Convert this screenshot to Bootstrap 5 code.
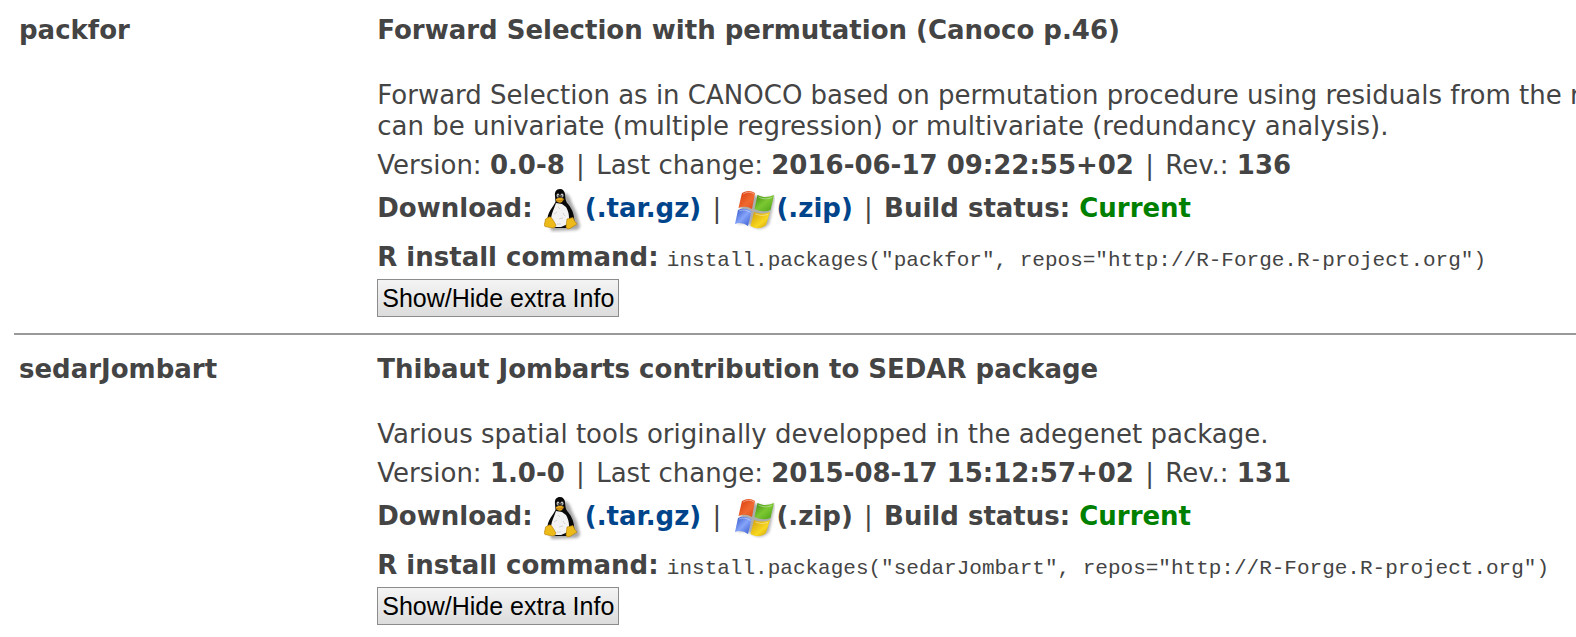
<!DOCTYPE html>
<html lang="en">
<head>
<meta charset="utf-8">
<meta name="viewport" content="width=device-width, initial-scale=1">
<title>R packages</title>
<link href="https://cdn.jsdelivr.net/npm/bootstrap@5.3.0/dist/css/bootstrap.min.css" rel="stylesheet">
<style>
  body { font: 26px/31px "DejaVu Sans", Verdana, sans-serif; color: #444; background: #fff; overflow-x: hidden; }
  .packages { padding: 15px 0 0 14px; }
  .package { padding: 0 0 16px; }
  .package + .package { border-top: 2px solid #999; padding-top: 19px; }
  .pkg-name { flex: 0 0 23%; padding-left: 5px; }
  .pkg-info { flex: 1 1 0; min-width: 0; padding-left: 4px; white-space: nowrap; }
  .package h2, .pkg-title { font-size: 26px; line-height: 31px; font-weight: 700; margin: 0; }
  .pkg-title { margin-bottom: 34px; }
  .pkg-info p { margin: 0 0 8px; }
  .package a { color: #00458b; font-weight: 700; text-decoration: none; }
  .downloads svg { width: 40px; height: 44px; margin: 0 1px 0 3px; vertical-align: -16px; }
  .sep { margin: 0 3px; }
  .current { color: #008000; }
  .package code { font: 21px "Liberation Mono", "Courier New", monospace; color: #444; }
  .pkg-info .downloads { margin-bottom: 9px; }
  .pkg-info .install { margin-bottom: 6px; }
  .toggle { font: 25px/32px "Liberation Sans", Arial, sans-serif; color: #000; padding: 2px 4px; border: 1px solid #8c8c8c; border-radius: 0; background: linear-gradient(#f4f4f4, #dcdcdc); display: block; }
</style>
</head>
<body>
<svg width="0" height="0" class="position-absolute" aria-hidden="true">
  <defs>
    <filter id="soft" x="-30%" y="-30%" width="160%" height="160%"><feGaussianBlur stdDeviation="1.5"/></filter>
    <linearGradient id="wr" x2="1" y2="1"><stop stop-color="#d8380c"/><stop offset=".6" stop-color="#f06a30"/><stop offset="1" stop-color="#d84a18"/></linearGradient>
    <linearGradient id="wg" x2="1" y2="1"><stop stop-color="#3c8a10"/><stop offset=".5" stop-color="#7cc832"/><stop offset="1" stop-color="#4ba018"/></linearGradient>
    <linearGradient id="wb" x2="1" y2="1"><stop stop-color="#2c50c8"/><stop offset=".5" stop-color="#86a4f8"/><stop offset="1" stop-color="#3055d0"/></linearGradient>
    <linearGradient id="wy" x2="1" y2="1"><stop stop-color="#d09a08"/><stop offset=".6" stop-color="#f8d820"/><stop offset="1" stop-color="#c89808"/></linearGradient>
    <symbol id="tux" viewBox="0 0 40 44">
      <path d="M20 4Q25 4 27 12L33 25L36 37Q36 41 30 41L8 42Q5 40 8 36L16 20Z" fill="#777" opacity=".65" filter="url(#soft)"/>
      <path d="M16 0C12 0 10.500 3 11 7L11.500 13C9 18 4.500 22 3.500 29L5 36L12 39H23L30 35C31 28 29 21 24 15C21 12 21.500 8 21 5C20.500 2 19 0 16 0Z" fill="#090909"/>
      <path d="M12 14L18 15L22 18C25 23 26 29 24 35L17 38H11L7 29C8 23 10 20 12 14Z" fill="#f3f3f3"/>
      <path d="M10 25l3-2m2 7l4-1m-5-11l2 2m3 4l2 3m-8 8h4" stroke="#d5d5d5" stroke-width="1" fill="none"/>
      <ellipse cx="14" cy="6.500" rx="1.400" ry="2" fill="#ccc"/><ellipse cx="18" cy="6.500" rx="1.500" ry="2" fill="#ccc"/>
      <circle cx="14.300" cy="7" r=".7"/><circle cx="17.700" cy="7" r=".7"/>
      <path d="M12 10Q16 7 20 10L18 13Q15.500 15 12 12Z" fill="#e9a91c"/>
      <path d="M12 11.500Q16 13 20 10.500" stroke="#a96d08" stroke-width=".8" fill="none"/>
      <path d="M5 28Q7 27 9 31L12 36Q11 40 6 38.500L1 37.500Q-.500 36 1 33L1.500 30Z" fill="#edbb19" stroke="#b47a05" stroke-width=".6"/>
      <path d="M23 30L29 28.500L30.500 32L33 35Q30 37 26 39.500Q23 41 22 38Z" fill="#edbb19" stroke="#b47a05" stroke-width=".6"/>
    </symbol>
    <symbol id="win" viewBox="0 0 40 44">
      <path d="M8 6Q16 3 21 7Q30 11 40 7L34 35Q26 43 17 37Q10 33 3 35Z" fill="#777" opacity=".6" filter="url(#soft)"/>
      <path d="M7 4Q14 0 20 4L17 20Q11 16 3.500 19Z" fill="url(#wr)"/>
      <path d="M22.500 6Q30 10 39 6L35.500 21Q28 24 19.500 20Z" fill="url(#wg)"/>
      <path d="M3 21Q9 18 16.500 22L13 37Q7 32.500 0 35Z" fill="url(#wb)"/>
      <path d="M19 23Q27 26 35 23L31 36Q24 42 15.500 37Z" fill="url(#wy)"/>
      <path d="M8 5Q14 1.500 19 5M23.500 8Q30 11.500 37 8.500M4 22Q10 19.500 15.500 23.500M20 25Q27 28 33 25.500" fill="none" stroke="#fff" opacity=".4"/>
    </symbol>
  </defs>
</svg>

<main class="packages">
  <article class="package d-flex">
    <h2 class="pkg-name">packfor</h2>
    <div class="pkg-info">
      <h3 class="pkg-title">Forward Selection with permutation (Canoco p.46)</h3>
      <p>Forward Selection as in CANOCO based on permutation procedure using residuals from the re<br>can be univariate (multiple regression) or multivariate (redundancy analysis).</p>
      <p>Version: <b>0.0-8</b> <span class="sep">|</span> Last change: <b>2016-06-17 09:22:55+02</b> <span class="sep">|</span> Rev.: <b>136</b></p>
      <p class="downloads"><b>Download:</b> <svg aria-hidden="true"><use href="#tux"/></svg><a href="#">(.tar.gz)</a> <span class="sep">|</span> <svg aria-hidden="true"><use href="#win"/></svg><a href="#">(.zip)</a> <span class="sep">|</span> <b>Build status: <span class="current">Current</span></b></p>
      <p class="install"><b>R install command:</b> <code>install.packages("packfor", repos="http://R-Forge.R-project.org")</code></p>
      <button type="button" class="toggle">Show/Hide extra Info</button>
    </div>
  </article>
  <article class="package d-flex">
    <h2 class="pkg-name">sedarJombart</h2>
    <div class="pkg-info">
      <h3 class="pkg-title">Thibaut Jombarts contribution to SEDAR package</h3>
      <p>Various spatial tools originally developped in the adegenet package.</p>
      <p>Version: <b>1.0-0</b> <span class="sep">|</span> Last change: <b>2015-08-17 15:12:57+02</b> <span class="sep">|</span> Rev.: <b>131</b></p>
      <p class="downloads"><b>Download:</b> <svg aria-hidden="true"><use href="#tux"/></svg><a href="#">(.tar.gz)</a> <span class="sep">|</span> <svg aria-hidden="true"><use href="#win"/></svg><b>(.zip)</b> <span class="sep">|</span> <b>Build status: <span class="current">Current</span></b></p>
      <p class="install"><b>R install command:</b> <code>install.packages("sedarJombart", repos="http://R-Forge.R-project.org")</code></p>
      <button type="button" class="toggle">Show/Hide extra Info</button>
    </div>
  </article>
</main>
<script src="https://cdn.jsdelivr.net/npm/bootstrap@5.3.0/dist/js/bootstrap.bundle.min.js"></script>
</body>
</html>
